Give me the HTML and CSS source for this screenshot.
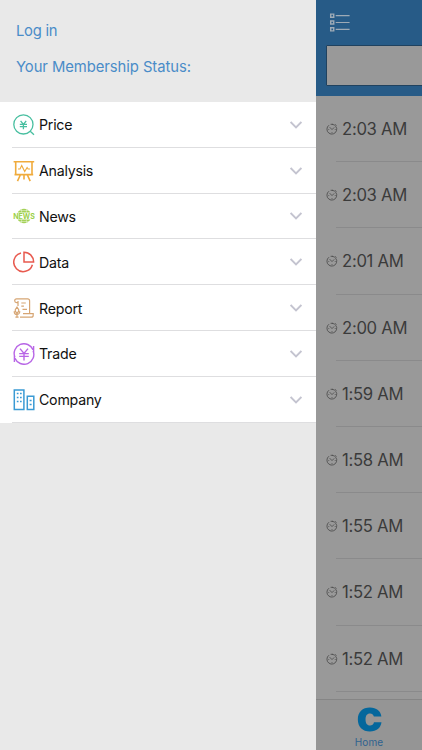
FILE: index.html
```html
<!DOCTYPE html>
<html lang="en">
<head>
    <meta charset="UTF-8">
    <meta name="viewport" content="width=device-width, initial-scale=1.0">
    <title>Home</title>
    <link rel="stylesheet" href="styles.css">
</head>
<body>
    <svg class="defs" width="0" height="0">
        <symbol id="down" viewBox="0 0 12 8"><path d="M.6 1l5.4 5.4L11.4 1"/></symbol>
        <symbol id="clock" viewBox="0 0 12 12"><path d="M3 2.2A4.9 4.9 0 1 0 6 1.3M4.6 1.3H7M9.3 1.4l1.2 1.1M3.7 4.2L6 6.6l2.2-2.2M2.4 6.5h.8M8.8 6.5h.8M6 9v.8"/></symbol>
    </svg>

    <div class="app">
        <aside class="drawer">
            <div class="account">
                <a class="login">Log in</a>
                <a class="status">Your Membership Status:</a>
            </div>
            <ul class="menu">
                <li>
                    <svg class="icon price" viewBox="0 0 22 22"><circle cx="10.4" cy="10.4" r="9.6"/><path d="M17.2 17.2l3.8 3.6M7.6 6.8l2.8 3.6 2.8-3.6M6.8 10.4H14M6.8 12.6H14M10.4 10.4v4.8"/></svg>
                    <span>Price</span>
                    <svg class="arrow"><use href="#down"/></svg>
                </li>
                <li>
                    <svg class="icon analysis" viewBox="0 0 22 22"><path d="M.6 1.7h20.6M2.7 1.7v12.8M19 1.7v12.8M1.5 14.6h18.7M7.3 15l-2.8 6.2M11 15v4.5M14.4 15l2.8 6.2"/><path class="chart" d="M5 9h2l1.7-3.5 3 6 2.4-4 1 1.5h2"/></svg>
                    <span>Analysis</span>
                    <svg class="arrow"><use href="#down"/></svg>
                </li>
                <li>
                    <svg class="icon news" viewBox="0 0 22 22"><path d="M4.6 7.4a7.4 7.4 0 0 1 12.8 0zM4.6 14.6a7.4 7.4 0 0 0 12.8 0z"/><path class="grid" d="M8.6 3.5v4M13.4 3.5v4M6 5.5h10M8.6 14.5v4M13.4 14.5v4M6 16.5h10"/><text x="0.2" y="13.5" textLength="21.6" lengthAdjust="spacingAndGlyphs">NEWS</text></svg>
                    <span>News</span>
                    <svg class="arrow"><use href="#down"/></svg>
                </li>
                <li>
                    <svg class="icon data" viewBox="0 0 22 22"><path d="M8 1.9A9.5 9.5 0 1 0 19.4 13.8M11 1.2v9.9h9.6A9.7 9.7 0 0 0 11 1.2z"/></svg>
                    <span>Data</span>
                    <svg class="arrow"><use href="#down"/></svg>
                </li>
                <li>
                    <svg class="icon report" viewBox="0 0 22 22"><path d="M4.4 5.6H3.6a1.9 1.9 0 0 1 0-3.8H14.6a2 2 0 0 1 2 2v12.8h3.6v1.6a2 2 0 0 1-2 2H7M5 4v5M16.6 16.6H10M8.3 6h4.5M8.3 9.2h2.6M9.5 12.4h4.5"/><path d="M4 10l1.7 2.6v1.6L4 16.4l-1.7-2.2v-1.6zM1.2 14.2c0 4.4 5.6 4.4 5.6 0M4 17.5V20M2.4 20.2h3.2"/></svg>
                    <span>Report</span>
                    <svg class="arrow"><use href="#down"/></svg>
                </li>
                <li>
                    <svg class="icon trade" viewBox="0 0 22 22"><path d="M1.9 14.2A9.7 9.7 0 0 1 20 6.8M20.1 7.8A9.7 9.7 0 0 1 2 15.2M20.6 3v7M1.4 12v7M7 5.6l4 4.8 4-4.8M6.2 10.6h9.6M6.2 13.4h9.6M11 10.4v7"/></svg>
                    <span>Trade</span>
                    <svg class="arrow"><use href="#down"/></svg>
                </li>
                <li>
                    <svg class="icon company" viewBox="0 0 22 22"><path d="M1.3 1h9.6v19.5H1.3zM14.3 7.2h6.5v13.3h-6.5zM3.8 4.6h1.7M7 4.6h1.7M3.8 8.5h1.7M7 8.5h1.7M3.8 12.4h1.7M7 12.4h1.7M16.6 11.5h2M16.6 15.5h2"/></svg>
                    <span>Company</span>
                    <svg class="arrow"><use href="#down"/></svg>
                </li>
            </ul>
        </aside>

        <main class="page">
            <header class="topbar">
                <svg class="list-icon" viewBox="0 0 22 20"><path class="box" d="M1.2 1.2h3.2v3.2H1.2zM1.2 8.4h3.2v3.2H1.2zM1.2 15.6h3.2v3.2H1.2z"/><path d="M6.5 2.8h14.6M6.5 10h14.6M6.5 17.2h14.6"/></svg>
                <div class="search"></div>
            </header>
            <ul class="feed">
                <li><svg class="clock"><use href="#clock"/></svg><time>2:03 AM</time></li>
                <li><svg class="clock"><use href="#clock"/></svg><time>2:03 AM</time></li>
                <li><svg class="clock"><use href="#clock"/></svg><time>2:01 AM</time></li>
                <li><svg class="clock"><use href="#clock"/></svg><time>2:00 AM</time></li>
                <li><svg class="clock"><use href="#clock"/></svg><time>1:59 AM</time></li>
                <li><svg class="clock"><use href="#clock"/></svg><time>1:58 AM</time></li>
                <li><svg class="clock"><use href="#clock"/></svg><time>1:55 AM</time></li>
                <li><svg class="clock"><use href="#clock"/></svg><time>1:52 AM</time></li>
                <li><svg class="clock"><use href="#clock"/></svg><time>1:52 AM</time></li>
            </ul>
            <nav class="tabbar">
                <div class="tab">
                    <svg class="logo" viewBox="0 0 24 24"><path d="M23.4 9.2h-7.2c-.6-2-1.8-3-3.7-3-3 0-4.3 2.2-4.3 5.8s1.3 5.8 4.3 5.8c2 0 3.3-1.1 3.8-3.2h7.2c-.6 5.4-4.8 8.9-11.1 8.9C5.2 23.5.8 19 .8 12S5.200.5 12.400.5c6.300 0 10.400 3.300 11 8.700z"/></svg>
                    <span>Home</span>
                </div>
            </nav>
        </main>
    </div>
</body>
</html>
```
FILE: styles.css
```css
body {
    margin: 0;
    font-family: Inter, "Liberation Sans", sans-serif;
    background-color: #e9e9e9;
}
ul {
    list-style: none;
    margin: 0;
    padding: 0;
}
svg {
    display: block;
    flex: none;
    fill: none;
}
.defs {
    position: absolute;
}
.app {
    display: flex;
    width: 422px;
    height: 750px;
    overflow: hidden;
}
.drawer {
    width: 316px;
    flex: none;
    background-color: #e9e9e9;
}
.account {
    height: 102px;
    box-sizing: border-box;
    padding: 21px 16px 0;
    display: flex;
    flex-direction: column;
    gap: 16px;
    color: #4a8cc8;
    font-size: 14.8px;
    line-height: 20px;
    letter-spacing: -0.06px;
}
.login,
.status {
    align-self: flex-start;
}
.login {
    letter-spacing: -0.25px;
}
.menu {
    background-color: #fff;
}
.menu li {
    display: flex;
    align-items: center;
    height: 45.8px;
    box-sizing: border-box;
    padding: 0 14px 0 13px;
    font-size: 14.2px;
    letter-spacing: -0.24px;
    color: #111;
    background: linear-gradient(#dedee0, #dedee0) 12px 100% / 304px 1px no-repeat;
}
.menu span {
    flex: 1;
    margin-left: 4px;
}
.icon {
    width: 22px;
    height: 22px;
    stroke-width: 1.3;
}
.price {
    stroke: #48bfa0;
}
.analysis {
    stroke: #f0ab3c;
    stroke-width: 1.6;
}
.analysis .chart {
    stroke-width: 1.1;
}
.news path {
    fill: #a4d158;
}
.news .grid {
    stroke: #fff;
    stroke-width: 0.4;
}
.news text {
    fill: #9bcf48;
    font-size: 7.2px;
    font-weight: 700;
    letter-spacing: 0;
}
.data {
    stroke: #e85a4f;
    stroke-width: 1.5;
}
.report {
    stroke: #d6a573;
    stroke-width: 1.2;
}
.trade {
    stroke: #b866e6;
    stroke-width: 1.4;
}
.company {
    stroke: #3a9ad4;
    stroke-width: 1.5;
}
.arrow {
    width: 12px;
    height: 8px;
    stroke: #c4c4d0;
    stroke-width: 1.9;
}
.page {
    flex: 1;
    display: flex;
    flex-direction: column;
    background-color: #999;
    overflow: hidden;
}
.topbar {
    height: 96px;
    flex: none;
    box-sizing: border-box;
    padding: 13px 0 0 10px;
    background-color: #275b87;
}
.list-icon {
    width: 22px;
    height: 19px;
    margin-left: 3px;
    stroke: #9daab6;
    stroke-width: 1.2;
}
.list-icon .box {
    stroke-width: 1.5;
}
.search {
    height: 39px;
    width: 120px;
    margin-top: 13px;
    border: 1px solid #20425f;
    border-radius: 1px;
    background-color: #999;
}
.feed {
    flex: 1;
}
.feed li {
    display: flex;
    align-items: center;
    height: 66.2px;
    box-sizing: border-box;
    padding-left: 9.5px;
    font-size: 16.7px;
    letter-spacing: -0.3px;
    color: #3b3b3b;
    background: linear-gradient(#8a8a8b, #8a8a8b) 20px 100% / 100px 1px no-repeat;
}
.clock {
    width: 12px;
    height: 12px;
    margin-right: 4.5px;
    stroke: #505050;
    stroke-width: 0.9;
}
.feed time {
    white-space: nowrap;
}
.tabbar {
    height: 51px;
    flex: none;
    box-sizing: border-box;
    border-top: 1px solid #858585;
    background-color: #959595;
}
.tab {
    width: 106px;
    display: flex;
    flex-direction: column;
    align-items: center;
    padding-top: 7px;
    font-size: 10px;
    line-height: 12px;
    letter-spacing: 0.15px;
    color: #2f628f;
}
.logo {
    width: 25px;
    height: 25px;
    fill: #04679c;
}
.tab span {
    margin-top: 4px;
}
```
